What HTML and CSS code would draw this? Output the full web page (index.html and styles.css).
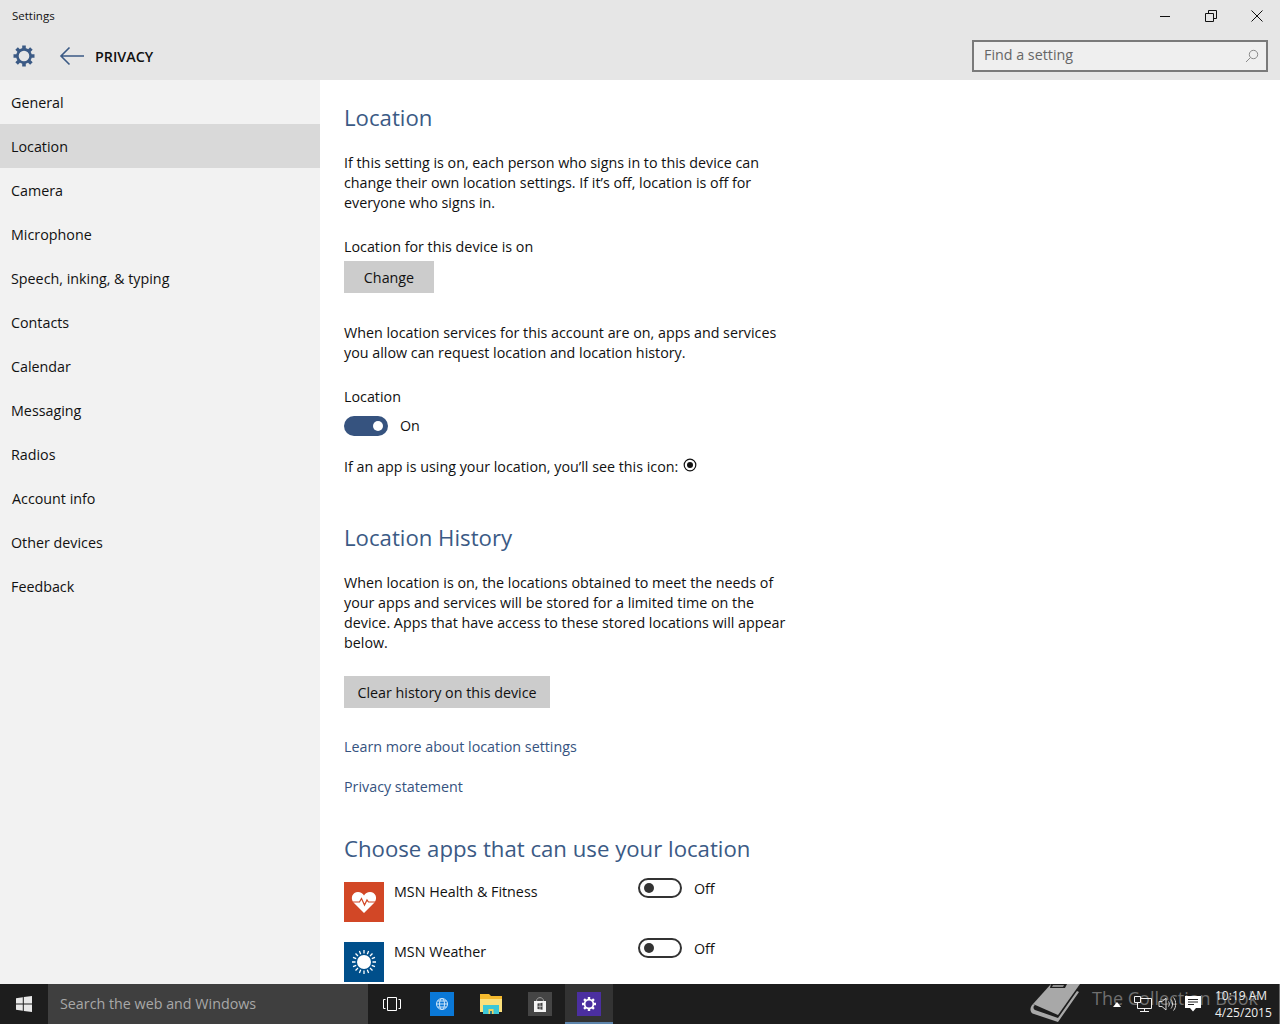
FILE: index.html
```html
<!DOCTYPE html>
<html lang="en">
<head>
    <meta charset="UTF-8">
    <title>Settings</title>
    <link rel="stylesheet" href="styles.css">
</head>
<body>
    <svg class="defs" width="0" height="0">
        <symbol id="gear" viewBox="0 0 24 24">
            <circle cx="12" cy="12" r="6.6" fill="none" stroke="currentColor" stroke-width="2.6"/>
            <g stroke="currentColor" stroke-width="3.6">
                <path d="M12 1.5V5M12 19v3.500M1.500 12H5M19 12h3.500M4.600 4.600l2.500 2.500M16.900 16.900l2.500 2.500M19.400 4.600l-2.500 2.500M7.100 16.900l-2.500 2.500"/>
            </g>
        </symbol>
    </svg>
    <div class="window">
        <header class="topbar">
            <div class="title-row">
                <span class="title">Settings</span>
                <div class="win-buttons">
                    <svg class="win-btn" width="12" height="12" viewBox="0 0 12 12"><path d="M1 6.500h10" stroke="#111" fill="none"/></svg>
                    <svg class="win-btn" width="12" height="12" viewBox="0 0 12 12"><path d="M.5 3.500h8v8h-8zM3.500 3.500v-3h8v8h-3" stroke="#111" fill="none"/></svg>
                    <svg class="win-btn" width="12" height="12" viewBox="0 0 12 12"><path d="M.5.500l11 11M11.500.500l-11 11" stroke="#111" fill="none"/></svg>
                </div>
            </div>
            <div class="nav-row">
                <svg class="gear" width="24" height="24"><use href="#gear"/></svg>
                <svg class="back" width="26" height="20" viewBox="0 0 26 20"><path d="M25 10H2M10.500 1.500L2 10l8.500 8.500" fill="none" stroke="#3b5a85" stroke-width="1.600"/></svg>
                <span class="page-name">PRIVACY</span>
                <div class="search">
                    <span>Find a setting</span>
                    <svg width="14" height="14" viewBox="0 0 14 14"><circle cx="8.500" cy="5.500" r="4.200" fill="none" stroke="#8a8a8a"/><path d="M5.500 8.500L1 13" stroke="#8a8a8a" fill="none"/></svg>
                </div>
            </div>
        </header>
        <div class="main">
            <nav class="sidebar">
                <a>General</a>
                <a class="active">Location</a>
                <a>Camera</a>
                <a>Microphone</a>
                <a>Speech, inking, &amp; typing</a>
                <a>Contacts</a>
                <a>Calendar</a>
                <a>Messaging</a>
                <a>Radios</a>
                <a class="shift">Account info</a>
                <a>Other devices</a>
                <a>Feedback</a>
            </nav>
            <section class="content">
                <h2 class="first">Location</h2>
                <p>If this setting is on, each person who signs in to this device can change their own location settings. If it’s off, location is off for everyone who signs in.</p>
                <p class="device-state">Location for this device is on</p>
                <button class="change">Change</button>
                <p class="services">When location services for this account are on, apps and services you allow can request location and location history.</p>
                <p class="toggle-label">Location</p>
                <div class="toggle-row">
                    <span class="toggle on"></span>
                    <span>On</span>
                </div>
                <p class="icon-note">If an app is using your location, you’ll see this icon:
                    <svg class="loc-icon" width="14" height="14" viewBox="0 0 14 14"><circle cx="7" cy="7" r="5.800" fill="none" stroke="#111" stroke-width="1.200"/><circle cx="7" cy="7" r="3" fill="#111"/></svg>
                </p>
                <h2 class="history">Location History</h2>
                <p>When location is on, the locations obtained to meet the needs of your apps and services will be stored for a limited time on the device. Apps that have access to these stored locations will appear below.</p>
                <button class="clear">Clear history on this device</button>
                <a class="link learn">Learn more about location settings</a>
                <a class="link privacy">Privacy statement</a>
                <h2 class="apps">Choose apps that can use your location</h2>
                <div class="app-row">
                    <div class="app-icon health">
                        <svg width="30" height="30" viewBox="0 0 30 30"><path d="M15 26L4.500 15.500C1 11 3.500 5 9 5c2.700 0 4.700 1.300 6 3.500C16.300 6.300 18.300 5 21 5c5.500 0 8 6 4.500 10.500z" fill="#fff"/><path d="M4 15h6.500l2-3.500 3 6.500 2.500-5 1.500 2h6.500" fill="none" stroke="#d24726" stroke-width="1.200"/></svg>
                    </div>
                    <span class="app-name">MSN Health &amp; Fitness</span>
                    <span class="toggle"></span>
                    <span class="off">Off</span>
                </div>
                <div class="app-row">
                    <div class="app-icon weather">
                        <svg width="26" height="26" viewBox="0 0 26 26"><circle cx="13" cy="13" r="7" fill="#fff"/><g stroke="#fff" stroke-width="1.300"><path d="M13 1v3.500M13 21.500V25M1 13h3.500M21.500 13H25M4.500 4.500L7 7M19 19l2.500 2.500M21.500 4.500L19 7M7 19l-2.500 2.500M8.400 2l1.300 3.200M16.300 20.800l1.300 3.200M17.600 2l-1.300 3.200M9.700 20.800L8.400 24M2 8.400l3.200 1.300M20.800 16.300l3.200 1.300M24 8.400l-3.200 1.300M5.200 16.300L2 17.600"/></g></svg>
                    </div>
                    <span class="app-name">MSN Weather</span>
                    <span class="toggle"></span>
                    <span class="off">Off</span>
                </div>
            </section>
        </div>
    </div>
    <footer class="taskbar">
        <div class="start">
            <svg width="18" height="18" viewBox="0 0 18 18"><path d="M1 3.300l6.800-1v6.200H1zM8.800 2.100L17 1v7.500H8.800zM1 9.500h6.800v6.200l-6.800-1zM8.800 9.500H17V17l-8.200-1.100z" fill="#e8e8e8"/></svg>
        </div>
        <div class="task-search">Search the web and Windows</div>
        <div class="task-view">
            <svg width="18" height="14" viewBox="0 0 18 14"><path d="M4.500.500h9v13h-9zM2.500 2.500H.500v9h2M15.500 2.500h2v9h-2" fill="none" stroke="#fff"/></svg>
        </div>
        <div class="task-app">
            <svg width="24" height="24" viewBox="0 0 24 24"><rect width="24" height="24" fill="#0a78d7"/><g fill="none" stroke="#cfe6fa"><circle cx="12" cy="12" r="5.500"/><ellipse cx="12" cy="12" rx="2.500" ry="5.500"/><path d="M6.500 12h11M7.500 9h9M7.500 15h9"/></g></svg>
        </div>
        <div class="task-app">
            <svg width="24" height="24" viewBox="0 0 24 24"><path d="M1 2h9l2 2h11v3H1z" fill="#f4b92d"/><path d="M1 7h22v13H1z" fill="#fbe07c"/><path d="M4 13h16v9H4z" fill="#3cc7d6"/><path d="M9.500 17h5v5h-5z" fill="#f4d35e"/><path d="M11 19h2v3h-2z" fill="#2a7f8c"/></svg>
        </div>
        <div class="task-app">
            <svg width="24" height="24" viewBox="0 0 24 24"><rect width="24" height="24" fill="#454545"/><path d="M8.500 9c0-4.500 7-4.500 7 0" fill="none" stroke="#a0a0a0"/><path d="M6 9h12v11H6z" fill="#f4f4f4"/><path d="M9.500 11.500l5-.7v7l-5-.7z" fill="#454545"/><path d="M12 11v7M9.500 14.300h5" stroke="#f4f4f4" stroke-width=".6"/></svg>
        </div>
        <div class="task-app current">
            <svg class="settings-tile" width="24" height="24" viewBox="0 0 24 24"><rect width="24" height="24" fill="#4b2fa0"/><svg x="4" y="4" width="16" height="16" color="#fff"><use href="#gear"/></svg></svg>
        </div>
        <div class="tray">
            <svg class="caret" width="8" height="5" viewBox="0 0 8 5"><path d="M4 0l4 5H0z" fill="#fff"/></svg>
            <svg class="net" width="18" height="18" viewBox="0 0 18 18"><path d="M3.500 3.500h14v10h-14zM10.500 13.500v3M6 16.500h9" fill="none" stroke="#f2f2f2"/><path d="M.5 1.500h6v6h-6z" fill="#1e1e1e" stroke="#f2f2f2"/></svg>
            <svg class="vol" width="18" height="16" viewBox="0 0 18 16"><path d="M1 5.500h3l4-3.500v12l-4-3.500H1zM10.500 5.500c1 1.500 1 3.500 0 5M13 3.500c2 2.500 2 6.500 0 9M15.500 1.500c3 3.500 3 9.500 0 13" fill="none" stroke="#d8d8d8"/></svg>
            <svg class="note" width="16" height="16" viewBox="0 0 16 16"><path d="M0 0h16v12h-5l-3 3.500L5 12H0z" fill="#fff"/><path d="M3 3.500h10M3 6h10M3 8.500h6" stroke="#222"/></svg>
            <div class="clock">
                <span>10:19 AM</span>
                <span>4/25/2015</span>
            </div>
        </div>
        <div class="watermark">
            <svg width="70" height="40" viewBox="0 0 70 40"><path d="M26 0h29L33 31 8 20z" fill="#a8a8a8"/><path d="M26 0h16l-2 4H25z" fill="#1d1d1d"/><path d="M28 1h11l-1 2H27z" fill="#8a8a8a"/><path d="M8 20c-4 4-3 9 1 10l24 8 21-30-2-1-19 27-23-8c-2-1-2-4 0-5z" fill="#a8a8a8"/></svg>
            <span>The Collection Book</span>
        </div>
    </footer>
</body>
</html>
```

FILE: styles.css
```css
* {
    margin: 0;
    padding: 0;
    box-sizing: border-box;
}
html, body {
    height: 100%;
    overflow: hidden;
}
body {
    font-family: "Open Sans", "Noto Sans", sans-serif;
    font-size: 14.3px;
    line-height: 20px;
    color: #111;
    background: #fff;
    display: flex;
    flex-direction: column;
}
.defs {
    position: absolute;
}
.window {
    height: 984px;
    display: flex;
    flex-direction: column;
    overflow: hidden;
}

/* top bar */
.topbar {
    height: 80px;
    flex: none;
    background: #e6e6e6;
}
.title-row {
    height: 32px;
    display: flex;
    align-items: center;
    justify-content: space-between;
    padding-left: 12px;
}
.title {
    font-size: 11.5px;
}
.win-buttons {
    display: flex;
    padding-right: 17px;
    gap: 34px;
}
.nav-row {
    height: 48px;
    display: flex;
    align-items: center;
    padding: 0 12px 0 12px;
}
.gear {
    color: #3b5a85;
}
.back {
    margin-left: 23px;
}
.page-name {
    margin-left: 10px;
    font-weight: 600;
    font-size: 14.3px;
    padding-top: 1px;
}
.search {
    margin-left: auto;
    width: 296px;
    height: 32px;
    border: 2px solid #7a7a7a;
    background: #efefef;
    color: #666;
    display: flex;
    align-items: center;
    justify-content: space-between;
    padding: 0 7px 2px 10px;
}
.search svg {
    margin-top: 2px;
}

/* sidebar */
.main {
    flex: 1;
    display: flex;
    min-height: 0;
}
.sidebar {
    width: 320px;
    flex: none;
    background: #f2f2f2;
}
.sidebar a {
    display: flex;
    align-items: center;
    height: 44px;
    padding: 2px 0 0 11px;
}
.sidebar a.active {
    background: #d9d9d9;
}
.sidebar a.shift {
    padding-left: 12px;
}

/* content */
.content {
    flex: 1;
    padding-left: 24px;
    overflow: hidden;
}
.content p {
    width: 445px;
}
h2 {
    font-weight: 400;
    font-size: 22.2px;
    line-height: 32px;
    color: #3b5a85;
}
h2.first {
    margin-top: 22px;
    margin-bottom: 19px;
}
button {
    display: block;
    font: inherit;
    height: 32px;
    border: 0;
    background: #cccccc;
    color: #111;
    padding-top: 1px;
}
.device-state {
    margin-top: 24px;
}
.change {
    width: 90px;
    margin-top: 4px;
}
.services {
    margin-top: 30px;
}
.toggle-label {
    margin-top: 24px;
}
.toggle-row {
    margin-top: 9px;
    height: 20px;
    display: flex;
    align-items: center;
    gap: 12px;
}
.toggle {
    width: 44px;
    height: 20px;
    border-radius: 10px;
    border: 2px solid #333;
    background: #fff;
    position: relative;
    flex: none;
}
.toggle::after {
    content: "";
    position: absolute;
    left: 4px;
    top: 3px;
    width: 10px;
    height: 10px;
    border-radius: 50%;
    background: #333;
}
.toggle.on {
    border: 0;
    background: #36537f;
}
.toggle.on::after {
    left: auto;
    right: 5px;
    top: 5px;
    background: #fff;
}
.icon-note {
    margin-top: 21px;
}
.loc-icon {
    position: relative;
    top: 0;
    margin-left: 1px;
}
h2.history {
    margin-top: 45px;
    margin-bottom: 19px;
}
.clear {
    width: 206px;
    margin-top: 23px;
}
.link {
    display: block;
    color: #36537f;
}
.learn {
    margin-top: 29px;
}
.privacy {
    margin-top: 20px;
}
h2.apps {
    margin-top: 36px;
    margin-bottom: 17px;
}
.app-row {
    display: flex;
    height: 40px;
    margin-bottom: 20px;
    position: relative;
}
.app-icon {
    width: 40px;
    height: 40px;
    flex: none;
    display: flex;
    align-items: center;
    justify-content: center;
}
.health {
    background: #d24726;
}
.weather {
    background: #004f8b;
}
.app-name {
    width: 244px;
    margin-left: 10px;
}
.app-row .toggle {
    margin-top: -4px;
}
.off {
    margin-left: 12px;
    margin-top: -3px;
}

/* taskbar */
.taskbar {
    height: 40px;
    flex: none;
    background: #1d1d1d;
    display: flex;
    align-items: stretch;
    position: relative;
    color: #fff;
}
.start {
    width: 48px;
    display: flex;
    align-items: center;
    justify-content: center;
    padding-bottom: 1px;
}
.task-search {
    width: 320px;
    background: #3f3f3f;
    color: #a8a8a8;
    display: flex;
    align-items: center;
    padding-left: 12px;
}
.task-view {
    width: 48px;
    display: flex;
    align-items: center;
    justify-content: center;
}
.task-view + .task-app {
    margin-left: 1px;
}
.task-app {
    width: 49px;
    display: flex;
    align-items: center;
    justify-content: center;
}
.task-app.current {
    width: 48px;
    margin-left: 1px;
    background: #333;
    border-bottom: 2px solid #5d84ab;
    padding-top: 2px;
}
.tray {
    position: absolute;
    right: 0;
    top: 0;
    bottom: 0;
    width: 170px;
    display: flex;
    align-items: center;
    border-right: 1px solid #6a6a6a;
    z-index: 1;
}
.caret {
    margin-left: 3px;
}
.net {
    margin-left: 13px;
}
.vol {
    margin-left: 6px;
}
.note {
    margin-left: 9px;
}
.clock {
    margin-left: 14px;
    display: flex;
    flex-direction: column;
    font-size: 12px;
    line-height: 17px;
    margin-top: -1px;
    color: #eee;
}
.watermark {
    position: absolute;
    left: 1025px;
    top: 0;
    display: flex;
    color: #6f6f6f;
    font-size: 18px;
    line-height: 29px;
}
.watermark span {
    margin-left: -3px;
}
```
